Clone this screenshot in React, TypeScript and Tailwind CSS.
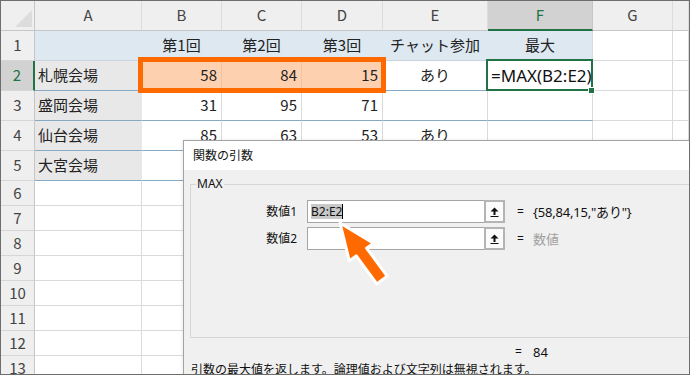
import React from "react";

const COLS = ["A", "B", "C", "D", "E", "F", "G", ""];
const WIDTHS = ["w-[107px]", "w-[80px]", "w-[80px]", "w-[81px]", "w-[105px]", "w-[105px]", "w-[80px]", "flex-1"];

const DATA: string[][] = [
  ["", "第1回", "第2回", "第3回", "チャット参加", "最大"],
  ["札幌会場", "58", "84", "15", "あり", "=MAX(B2:E2)"],
  ["盛岡会場", "31", "95", "71", "", ""],
  ["仙台会場", "85", "63", "53", "あり", ""],
  ["大宮会場", "", "", "", "", ""],
];

/**
 * Class list for one sheet cell. r is the 1-based row, c the 0-based column (0 = A)
 */
function cellClass(r: number, c: number) {
  const inTable = r <= 5 && c <= 5;
  let bg = "bg-white";
  let right = "border-r-[#dadada]";
  let bottom = "border-b-[#dadada]";
  if (inTable && r === 1) {
    bg = "bg-[#dde8f1]";
    right = c === 5 ? "border-r-[#dadada]" : "border-r-[#dde8f1]";
    bottom = "border-b-[#c9d4de]";
  } else if (inTable && c === 0) {
    bg = "bg-[#e8e8e8]";
    right = "border-r-[#e8e8e8]";
  } else if (r === 2 && c >= 1 && c <= 3) {
    bg = "bg-[#fdd0b0]";
    right = "border-r-[#f0c3a4]";
  }
  if (inTable && r >= 2) bottom = "border-b-[#86a9c4]";

  let align = "justify-end pr-[4px]";
  if (r === 1 || c === 4) align = "justify-center";
  else if (c === 0 || c === 5) align = "justify-start pl-[3px]";

  return `${WIDTHS[c]} ${bg} ${right} ${bottom} ${align} flex items-center border-r border-b whitespace-nowrap`;
}

function UploadIcon() {
  return (
    <svg width="9" height="10" viewBox="0 0 9 10">
      <path d="M4.5 0.5 L8.5 4.5 L5.5 4.5 L5.5 8 L3.5 8 L3.5 4.5 L0.5 4.5 Z" fill="#111" />
      <rect x="0.5" y="9" width="8" height="1" fill="#111" />
    </svg>
  );
}

function ArgInput({ value }: { value?: string }) {
  return (
    <div className="flex h-[23px] w-[198px] border border-[#a5a5a5] bg-white">
      <div className="flex flex-1 items-center pl-[3px]">
        {value && (
          <>
            <span className="bg-[#c8c8c8] leading-[15px]">{value}</span>
            <span className="h-[15px] w-px bg-black" />
          </>
        )}
      </div>
      <div className="flex w-[21px] items-center justify-center border-2 border-[#b4b4b4] bg-[#fbfbfb] -my-px -mr-px">
        <UploadIcon />
      </div>
    </div>
  );
}

export default function App() {
  const rowNumbers = Array.from({ length: 13 }, (_, i) => i + 1);

  return (
    <div className="relative h-[375px] w-[690px] overflow-hidden border border-[#6e6e6e] bg-white font-['Noto_Sans_CJK_JP','Noto_Sans',sans-serif] text-[15px] text-[#222]">
      {/* column headers */}
      <div className="flex h-[30px]">
        <div className="relative w-[34px] border-r border-b border-r-[#c6c6c6] border-b-[#c6c6c6] bg-[#efefef]">
          <svg className="absolute left-0 top-0" width="33" height="29" viewBox="0 0 33 29">
            <polygon points="14,26 31,26 31,9" fill="#dcdcdc" />
          </svg>
        </div>
        {COLS.map((col, c) => (
          <div
            key={c}
            className={`${WIDTHS[c]} flex items-center justify-center border-r ${
              c === 5
                ? "border-b-2 border-b-[#217346] border-r-[#c6c6c6] bg-[#d2d2d2] text-[#217346]"
                : "border-b border-b-[#c6c6c6] border-r-[#dcdcdc] bg-[#efefef] text-[#444]"
            }`}
          >
            {col}
          </div>
        ))}
      </div>

      {/* rows */}
      {rowNumbers.map((r) => (
        <div key={r} className={`flex ${r <= 5 ? "h-[30px]" : "h-[25px]"}`}>
          <div
            className={`flex w-[34px] items-center justify-center border-b border-b-[#d6d6d6] ${
              r === 2
                ? "border-r-2 border-r-[#217346] bg-[#d2d2d2] text-[#217346]"
                : "border-r border-r-[#c6c6c6] bg-[#efefef] text-[#444]"
            }`}
          >
            {r}
          </div>
          {COLS.map((_, c) => {
            const text = r <= 5 && c <= 5 ? DATA[r - 1][c] : "";
            return (
              <div key={c} className={cellClass(r, c)}>
                <span className={r === 2 && c === 5 ? "font-['Noto_Sans',sans-serif] text-[17px] text-[#111]" : ""}>{text}</span>
              </div>
            );
          })}
        </div>
      ))}

      {/* orange highlight on B2:D2 */}
      <div className="absolute left-[137px] top-[56px] h-[36px] w-[248px] border-[5px] border-[#ff6a00]" />

      {/* active cell F2 */}
      <div className="absolute left-[485px] top-[58px] h-[32px] w-[107px] border-2 border-[#217346]" />
      <div className="absolute left-[587px] top-[86px] h-[7px] w-[7px] border border-white bg-[#217346]" />

      {/* function arguments dialog */}
      <div className="absolute left-[182px] top-[139px] h-[260px] w-[560px] border border-[#a3a3a3] bg-[#f0f0f0] font-['Noto_Sans','Noto_Sans_CJK_JP',sans-serif] text-[12px] leading-[16px] text-[#111] shadow-[-1px_0_3px_rgba(0,0,0,0.08)]">
        <div className="flex h-[29px] items-center bg-white pl-[9px]">関数の引数</div>

        <div className="relative ml-[6px] mt-[14px] h-[154px] w-[530px] border border-[#d6d6d6]">
          <span className="absolute left-[5px] -top-[9px] bg-[#f0f0f0] px-px">MAX</span>
          <div className="flex flex-col gap-[4px] pt-[15px]">
            <div className="flex items-center">
              <div className="w-[106px] text-right">数値1</div>
              <div className="ml-[10px]">
                <ArgInput value="B2:E2" />
              </div>
              <div className="ml-[12px] w-[16px]">=</div>
              <div className="text-[13px] tracking-[-0.2px]">{'{58,84,15,"あり"}'}</div>
            </div>
            <div className="flex items-center">
              <div className="w-[106px] text-right">数値2</div>
              <div className="ml-[10px]">
                <ArgInput />
              </div>
              <div className="ml-[12px] w-[16px]">=</div>
              <div className="text-[13px] text-[#a0a0a0]">数値</div>
            </div>
          </div>
        </div>

        <div className="mt-[6px] flex">
          <div className="ml-[331px] w-[18px]">=</div>
          <div className="text-[13px]">84</div>
        </div>
        <div className="ml-[7px] mt-[2px] whitespace-nowrap">
          引数の最大値を返します。論理値および文字列は無視されます。
        </div>
      </div>

      {/* pointer arrow */}
      <svg className="absolute -left-px -top-px" width="690" height="375" viewBox="0 0 690 375">
        <polygon
          points="340,223 373.5,243.1 366.6,248.1 387.2,276.1 376.8,283.9 356.2,255.9 349.3,260.9"
          fill="#ff6a00"
          stroke="#fff"
          strokeWidth="3"
          strokeLinejoin="round"
        />
      </svg>
    </div>
  );
}
